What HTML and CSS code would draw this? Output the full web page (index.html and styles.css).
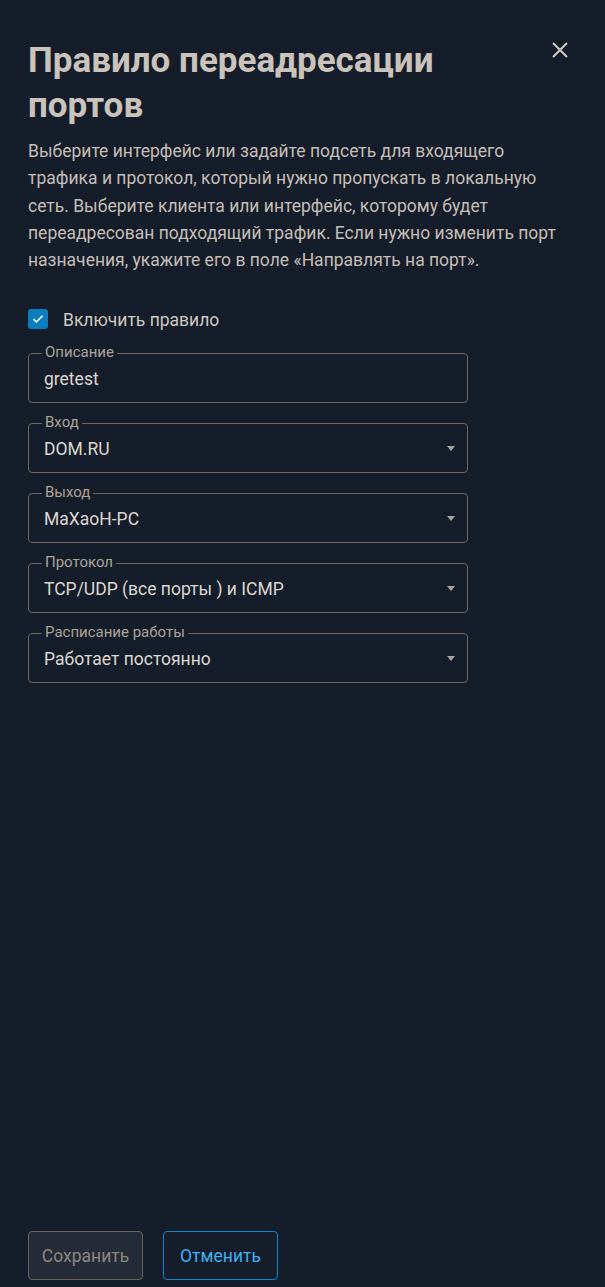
FILE: index.html
```html
<!DOCTYPE html>
<html lang="ru">
<head>
<meta charset="utf-8">
<link rel="stylesheet" href="styles.css">
</head>
<body>
<div class="page">
  <button class="close" aria-label="Закрыть">
    <svg width="16" height="16" viewBox="0 0 16 16"><path d="M1 1L15 15M15 1L1 15" stroke="#d0cbc4" stroke-width="2" fill="none"/></svg>
  </button>
  <h1 class="title">Правило переадресации портов</h1>
  <p class="desc">Выберите интерфейс или задайте подсеть для входящего трафика и протокол, который нужно пропускать в локальную сеть. Выберите клиента или интерфейс, которому будет переадресован подходящий трафик. Если нужно изменить порт назначения, укажите его в поле «Направлять на порт».</p>
  <label class="check-row">
    <span class="checkbox">
      <svg width="12" height="10" viewBox="0 0 12 10"><path d="M1.5 5.2L4.5 8L10.5 1.8" stroke="#fff" stroke-width="1.6" fill="none"/></svg>
    </span>
    <span class="check-label">Включить правило</span>
  </label>
  <div class="fields">
    <div class="field">
      <span class="field-label">Описание</span>
      <span class="field-value">gretest</span>
    </div>
    <div class="field select">
      <span class="field-label">Вход</span>
      <span class="field-value">DOM.RU</span>
      <span class="arrow"></span>
    </div>
    <div class="field select">
      <span class="field-label">Выход</span>
      <span class="field-value">MaXaoH-PC</span>
      <span class="arrow"></span>
    </div>
    <div class="field select">
      <span class="field-label">Протокол</span>
      <span class="field-value">TCP/UDP (все порты ) и ICMP</span>
      <span class="arrow"></span>
    </div>
    <div class="field select">
      <span class="field-label">Расписание работы</span>
      <span class="field-value">Работает постоянно</span>
      <span class="arrow"></span>
    </div>
  </div>
  <div class="actions">
    <button class="btn btn-save">Сохранить</button>
    <button class="btn btn-cancel">Отменить</button>
  </div>
</div>
</body>
</html>
```
FILE: styles.css
```css
* { box-sizing: border-box; }
html, body { margin: 0; padding: 0; }
body {
  background: #161d2a;
  font-family: Roboto, "Liberation Sans", sans-serif;
  color: #c6c0b8;
}
.page {
  position: relative;
  height: 1287px;
  padding: 38px 28px 7px 28px;
  display: flex;
  flex-direction: column;
}
.close {
  position: absolute;
  top: 42px;
  right: 37px;
  width: 16px;
  height: 16px;
  padding: 0;
  border: 0;
  background: none;
  display: flex;
}
.title {
  margin: 0;
  font-size: 35px;
  line-height: 45px;
  font-weight: 700;
  color: #c9c3bb;
  width: 480px;
}
.desc {
  margin: 10px 0 0 0;
  font-size: 17.5px;
  line-height: 27.3px;
  color: #c5bfb7;
  width: 532px;
}
.check-row {
  margin-top: 35px;
  display: flex;
  align-items: center;
  gap: 15px;
  height: 20px;
}
.checkbox {
  width: 20px;
  height: 20px;
  border-radius: 3px;
  background: #0b7dc0;
  display: flex;
  align-items: center;
  justify-content: center;
}
.check-label {
  font-size: 17.5px;
  color: #cfc9c1;
  padding-top: 1px;
}
.fields {
  margin-top: 24px;
  display: flex;
  flex-direction: column;
  gap: 20px;
  width: 440px;
}
.field {
  position: relative;
  height: 50px;
  border: 1px solid #6f675d;
  border-radius: 4px;
  display: flex;
  align-items: center;
  padding: 0 15px;
}
.field-label {
  position: absolute;
  top: -10px;
  left: 13px;
  padding: 0 3px;
  background: #161d2a;
  font-size: 15px;
  line-height: 16px;
  color: #aca499;
}
.field-value {
  font-size: 17.5px;
  color: #dcd7d0;
  flex: 1;
  padding-top: 1px;
}
.arrow {
  width: 0;
  height: 0;
  border-left: 4px solid transparent;
  border-right: 4px solid transparent;
  border-top: 5px solid #aaa49c;
  margin-right: -3px;
}
.actions {
  margin-top: auto;
  display: flex;
  gap: 20px;
}
.btn {
  height: 49px;
  width: 115px;
  border-radius: 4px;
  font-family: Roboto, "Liberation Sans", sans-serif;
  font-size: 17.5px;
  padding: 0;
}
.btn-save {
  background: #252b37;
  border: 1px solid #6b645c;
  color: #8c8780;
}
.btn-cancel {
  background: transparent;
  border: 1px solid #0b87c9;
  color: #3eb0ef;
}
```
